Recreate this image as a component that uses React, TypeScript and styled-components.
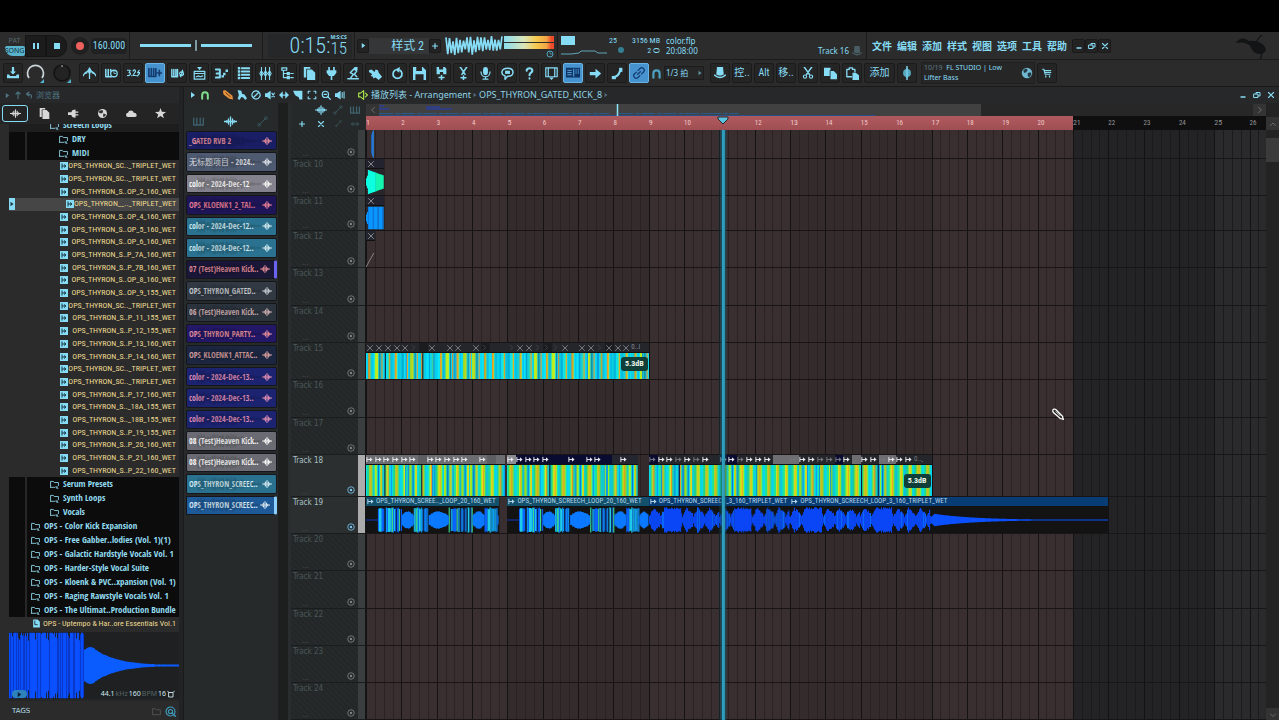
import React from 'react';
import styled, { createGlobalStyle, css } from 'styled-components';

const CONDENSED = '"Open Sans Condensed", "Roboto Condensed", "Noto Sans CJK SC", sans-serif';
const NARROW = '"Roboto Condensed", "Noto Sans CJK SC", sans-serif';
const UI = '"Noto Sans", "Noto Sans CJK SC", sans-serif';
const CYAN = '#86dcf5';
const VISIBLE_BARS = 25.46;

const barWidth = (bars: number) => `${(bars / VISIBLE_BARS) * 100}%`;

const rng = (seed: number) => {
  let s = seed * 7919 + 17;
  return () => {
    s = (s * 1103515245 + 12345) % 2147483648;
    return s / 2147483648;
  };
};

const GlobalStyle = createGlobalStyle`
  * { box-sizing: border-box; }
  body { margin: 0; background: #000; color: ${CYAN}; font: 9px/12px ${UI}; overflow: hidden; }
  button, input, select { font: inherit; color: inherit; background: none; border: 0; padding: 0; margin: 0; }
  button { display: flex; align-items: center; justify-content: center; }
  ul { list-style: none; margin: 0; padding: 0; }
  svg { display: block; flex: none; }
`;

/* ---------- icons ---------- */

const S = ({ d, w = 1.4 }: { d: string; w?: number }) => (
  <path d={d} fill="none" stroke="currentColor" strokeWidth={w} strokeLinecap="round" strokeLinejoin="round" />
);
const F = ({ d }: { d: string }) => <path d={d} fill="currentColor" fillRule="evenodd" />;

const icons: Record<string, React.ReactNode> = {
  tray: <><F d="M6.5 1a1.5 1.5 0 0 1 3 0v5H12L8 10 4 6h2.500z" /><F d="M0 10h3l1 2h8l1-2h3v5H0z" /></>,
  fly: <><S d="M0 11c2-4 5-6 8-6s6 2 8 6M8 5v9" w={1.600} /><F d="M8 0l3 5-3 4-3-4z" /><S d="M5 7l-2 1M11 7l2 1" /></>,
  pianoClock: <><S d="M1 3v9h7M4 3v8M7 3v2" w={1.900} /><circle cx="11" cy="8" r="4" fill="#222" stroke="currentColor" strokeWidth="1.600" /><S d="M11 5.500V8h2" w={1} /></>,
  count: <><S d="M0 4h4L2.500 7c3 0 2 4-2 3.500M7.500 5c0-2 3-2 3 0 0 2-3 3.500-3 5.500h3M15 4l-2 3h3l-3 4M5.800 10.500v.2M12 10.500v.2" w={1.400} /></>,
  pianoPlus: <S d="M1 3v9h8V3M3.800 3v8M6.500 3v8M13 5v6M10.800 8h5" w={1.900} />,
  pianoLoop: <><S d="M1 3v9h7V3M3.500 3v8M6 3v8" w={1.800} /><S d="M10.500 8a2.500 2.500 0 0 1 4.500-1M15.500 8a2.500 2.500 0 0 1-4.500 1.500M14 4l1 3-2 .5M12 12l-1-2.500 2-.5" w={1.500} /></>,
  windowDown: <><S d="M1.500 5.500h13v9.500h-13zM1.500 8h13M4 12l3-1 2 1 3-1" w={1.500} /><F d="M5 0h6L8 4z" /></>,
  steps: <><S d="M1 3h5v5H2h4v5H1" w={2.400} /><F d="M8 10h3v3H8zM10 7h3v3h-3zM13 3h3v3h-3z" /></>,
  rack: <><F d="M1 0h3v3H1zM1 4h3v3H1zM1 8h3v3H1zM1 12h3v3H1z" /><S d="M6 1.500h9M6 5.500h9M6 9.500h9M6 13.500h9" w={2.600} /></>,
  mixer: <><S d="M3 0v16M8 0v16M13 0v16" w={1.300} /><S d="M3 4.500L1 8l2 3.500L5 8zM8 4.500L6 8l2 3.500L10 8zM13 4.500L11 8l2 3.500L15 8z" w={1.300} /></>,
  tree: <><S d="M1 1h6v3H1zM3 4v9h4M3 8h4M12 8h3M12 13h3" w={1.500} /><F d="M7 6h4v4H7zM7 11h4v4H7z" /></>,
  file: <><F d="M1 0h8v2H4v11H1z" /><F d="M5 3h6l4 4v9H5z" /></>,
  plug: <F d="M4 0h2v4h4V0h2v4h2v3l-3 4H9v5H7v-5H5L2 7V4h2z" />,
  robot: <><S d="M1 14.500h13M4 14l4-5-4-2 5-5 3 3-3 4 3 3" w={1.800} /><F d="M9 0h4v4H9z" /></>,
  hand: <F d="M0 4l3-1 4 3 1-3 3 1 1 3 4 5-4 4-4-3-3 1 0-2-3-1 2-2-4-3z" />,
  power: <><S d="M5 4a5.500 5.500 0 1 0 6 0" w={2.100} /><F d="M5 3l6-3-1 7z" /></>,
  save: <F d="M0 0h12l4 4v12H0zM4 0v5h7V0zM3 9v7h10V9z" />,
  savePlus: <><F d="M2 0h10l2 2v7H2zM5 0v3h5V0zM6 6v3h4V6z" /><S d="M8 10.500v5M5 13h6" w={1.900} /></>,
  cutPlus: <><S d="M4 0l6 9M12 0L6 9M8 11v4.500M5 13.200h6" w={1.900} /></>,
  mic: <><rect x="5" y="0" width="6" height="10" rx="3" fill="currentColor" /><S d="M2.500 6c0 8 11 8 11 0M8 12v3M5 15h6" w={1.500} /></>,
  chat: <><S d="M8 1.500c9 0 9 10 0 10L5 15v-4C-1 9 0 1.500 8 1.500z" w={1.800} /><F d="M5 4.500h6v4H5z" /></>,
  help: <S d="M4.500 4.500c0-4 7-4 7 0 0 2.500-3.500 2.500-3.500 5.500M8 14v.3" w={2.600} />,
  film: <><S d="M1 1h14v11H1zM4 1v11M12 1v11" w={1.500} /><F d="M5 13h6l-3 3z" /></>,
  keyboard: <><path d="M0 2h16v11H0zM8 3v9h1.500V3zM11 3v6h1V3zM13.500 3v6h1V3z" fill="#0f3566" fillRule="evenodd" /><path d="M1.500 5h5M1.500 7.500h5M1.500 10h5" stroke="#6ab0e6" strokeWidth="1" /></>,
  arrow: <F d="M1 6h7V2l7 6-7 6v-4H1z" />,
  slide: <><F d="M1 11h5v4H1z" /><S d="M5 12c4-1 5-3 6-7" w={2.600} /><F d="M10 1h4v5h-4z" /></>,
  link: <S d="M6.500 9.500l3-3M5 7L2.500 9.500c-2 2 1.500 6 4 4L9 11M7 5l2.500-2.500c2-2 6 1.500 4 4L11 9" w={1.500} />,
  magnet: <S d="M3.500 14V8c0-6 9-6 9 0v6" w={3.200} />,
  hat: <><F d="M4 0h8l1 10c-3 2-7 2-10 0z" /><S d="M1 11c4 4 10 4 14 0" w={2.200} /></>,
  cut: <><S d="M3 0l7 10M13 0L6 10" w={1.900} /><circle cx="4" cy="12.800" r="2.200" fill="none" stroke="currentColor" strokeWidth="1.500" /><circle cx="12" cy="12.800" r="2.200" fill="none" stroke="currentColor" strokeWidth="1.500" /></>,
  copy: <><F d="M0 1h8v3H7v7H0z" /><F d="M8 5h4l4 4v6H8z" /></>,
  paste: <><S d="M7 12H1V3h3V1h4v2h3v3" w={1.600} /><F d="M8 7h4l4 3v6H8z" /></>,
  wheel: <><S d="M8 0v16" w={1.600} /><circle cx="8" cy="8" r="4.500" fill="#57a9c0" /><S d="M8 3v10" w={1.300} /></>,
  globe: <><circle cx="8" cy="8" r="7" fill="#6fb7cf" /><path d="M3 4l4-2 2 2-2 3-3 1zM9 8l4-1 1 3-3 4-2-2z" fill="#243a44" /></>,
  world: <><circle cx="8" cy="8" r="6.500" fill="#d8d8d8" /><path d="M3 4l5-1 1 3-3 2-3-1zM9 8l4 1-1 3-3 1z" fill="#333" /></>,
  cart: <><S d="M1 2h2l2 8h8M4 4h10M5 7h9" w={1.700} /><F d="M5 12h2v3H5zM11 12h2v3h-2z" /></>,
  wave: <><S d="M0 8h16" w={1.600} /><S d="M3.500 7v2M5.500 5v6M8 2.500v11M10.500 5v6M12.500 7v2" w={1.700} /></>,
  plugin: <F d="M0 6h5c0-3 3-4 6-4v3h4v2h-4v2h4v2h-4v3c-3 0-6-1-6-4H0z" />,
  cloud: <F d="M3 13a3 3 0 0 1 0-6c1-5 8-4 8 0 5-1 6 6 2 6z" />,
  star: <F d="M8 0l2 5.500 6 .2-4.700 3.600L13 15l-5-3.300L3 15l1.700-5.700L0 5.700l6-.2z" />,
  up: <S d="M8 15V3M4 6l4-4 4 4" w={2.200} />,
  back: <S d="M12 14c3-5 0-8-8-8M8 2L3 6l5 4" w={2.200} />,
  play: <F d="M4 2l8 6-8 6z" />,
  pencil: <><path d="M0 3c0-3 3-3 5-2l10 8 1 6-6-1L1 7z" fill="#e8923c" /><path d="M4 4l8 7" stroke="#5a3413" strokeWidth="1.500" /></>,
  cursor: <><path d="M1 4c0-3 3-3 4-2l9 9 1 4-4-1-9-8z" fill="#222" stroke="#fff" strokeWidth="1.700" /><path d="M5 4.500l6 6" stroke="#fff" strokeWidth="1.200" /></>,
  brush: <F d="M1 0l6 1 1 5 4 1 4 6-3 3-3-4-3-1-3 5-3-2 2-6z" />,
  mute: <S d="M8 1.500a6.500 6.500 0 1 0 .1 0M3.500 12.500l9-9" w={2} />,
  speakerX: <><F d="M0 5h3l6-4v14l-6-4H0z" /><S d="M11 5l4 6M15 5l-4 6" w={1.700} /></>,
  speaker: <><F d="M0 5h3l6-4v14l-6-4H0z" /><S d="M11.500 4v8M14.500 3v10" w={1.700} /></>,
  speakerOut: <><S d="M1 5h3l5-4v14l-5-4H1z" w={1.900} /><S d="M12 5l3 3-3 3" w={1.900} /></>,
  slip: <F d="M0 8l6-6v5h4V2l6 6-6 6V9H6v5z" />,
  slice: <F d="M0 1h15v14h-5c0-3-1-4-4-5S2 5 0 1z" />,
  select: <S d="M2 5V2h3M11 2h3v3M14 11v3h-3M5 14H2v-3" w={1.900} />,
  zoom: <><circle cx="7" cy="7" r="5" fill="none" stroke="currentColor" strokeWidth="1.900" /><S d="M10.500 10.500L15 15M5 7h4" w={2} /></>,
  curve: <><S d="M4 12l8-8" w={1.200} /><circle cx="3" cy="13" r="2" fill="none" stroke="currentColor" /><circle cx="13" cy="3" r="2" fill="none" stroke="currentColor" /></>,
  piano: <S d="M1 3v10h14V3M5.500 3v9M10.500 3v9" w={2} />,
  plus: <S d="M8 3v10M3 8h10" w={2.400} />,
  cross: <S d="M3 3l10 10M13 3L3 13" w={2.200} />,
  crossThin: <S d="M3 3l10 10M13 3L3 13" w={1.700} />,
  horiz: <S d="M1 8h14M4 5L1 8l3 3M12 5l3 3-3 3" w={1.500} />,
  left: <S d="M11 3L5 8l6 5" w={1.600} />,
  right: <S d="M5 3l6 5-6 5" w={1.600} />,
  chevUp: <S d="M3 11l5-5 5 5" w={1.600} />,
  chevDown: <S d="M3 6l5 5 5-5" w={1.600} />,
  min: <S d="M4 12h8" w={2.600} />,
  restore: <><S d="M2 6h8v7H2zM6 6V3h8v7h-4" w={2} /></>,
  folder: <S d="M1 13V2.500h5l1.500 2H15V10M1 13h8M12.500 11.500v4M11 12l3 3" w={1.500} />,
  folderPlain: <S d="M1 13V3h5l2 2h7v8z" w={1.500} />,
  sample: <><rect width="16" height="16" fill="#86dcf5" /><path d="M4 3v10M8 5l4 3-4 3M4 8h6" stroke="#173642" strokeWidth="2" fill="none" /></>,
  doc: <><F d="M2 1h8l4 4v10H2z" /><path d="M5 3v7h5" stroke="#1b3c48" strokeWidth="1.700" fill="none" /></>,
  clipArrow: <><S d="M2 3v10M3 8h8" w={2.200} /><F d="M9 3l6 5-6 5z" /></>,
  clock: <><circle cx="8" cy="8" r="6" fill="none" stroke="currentColor" strokeWidth="2" /><S d="M8 4v4h4" /></>,
  search: <><circle cx="8" cy="8" r="6.500" fill="none" stroke="currentColor" strokeWidth="1.700" /><circle cx="8" cy="8" r="3" fill="none" stroke="currentColor" strokeWidth="1.500" /><S d="M10 10l5 5" w={2} /></>,
  circle: <><circle cx="8" cy="8" r="6.500" fill="none" stroke="currentColor" strokeWidth="1.700" /><circle cx="8" cy="8" r="2.500" fill="currentColor" /></>,
  stretch: <S d="M4 5h8v9H4zM1 2l3 3M15 2l-3 3" w={1.800} />,
};

const Icon = ({ n, s = 12 }: { n: string; s?: number }) => (
  <svg width={s} height={s} viewBox="0 0 16 16" aria-hidden="true">{icons[n]}</svg>
);

/* ---------- shell ---------- */

const Page = styled.div`
  min-height: 100vh; display: flex; flex-direction: column; padding-top: 32px; background: #000;
`;
const Bar = styled.header`
  height: 28px; display: flex; align-items: center; background: #2c2c2c; border-bottom: 1px solid #1b1b1b; overflow: hidden;
`;
const ToolRow = styled.div`
  height: 27px; display: flex; align-items: center; gap: 2px; padding-left: 3px; background: #2b2b2b; border-bottom: 1px solid #191919;
`;
const Transport = styled.div`display: flex; height: 22px; margin-left: 4px;`;
const ModeSwitch = styled.button`
  width: 21px; flex-direction: column; font: 7px/10px ${UI}; color: #56696f;
  span { width: 20px; border-radius: 2px 2px 2px 8px; background: #5ab4cd; color: #12303a; }
`;
const TransportButton = styled.button<{ $end?: boolean }>`
  width: 21px; background: #1c1c1d; border: 1px solid #151515; ${p => p.$end && 'border-radius: 0 10px 10px 0;'}
`;
const RecordButton = styled.button`
  width: 18px; height: 18px; border-radius: 9px; margin-left: 4px; background: #202020;
  &::after { content: ''; width: 8px; height: 8px; border-radius: 4px; background: #f0605c; }
`;
const Tempo = styled.input`
  width: 36px; height: 16px; margin-left: 2px; background: #1f2122; border-radius: 4px; font: 10px/16px ${NARROW}; text-align: center;
`;
const Divider = styled.i<{ $m?: number }>`width: 1px; height: 28px; background: #1c1c1c; margin: 0 ${p => p.$m ?? 2}px;`;
const Position = styled.input`
  appearance: none; width: 117px; height: 12px; margin-left: 8px; background: linear-gradient(${CYAN}, ${CYAN}) 0 50% / 112px 3px no-repeat;
  &::-webkit-slider-thumb { appearance: none; width: 10px; height: 11px; border-radius: 5px; background: linear-gradient(90deg, #262626 4px, #7f9aa3 4px, #7f9aa3 6px, #262626 6px); }
`;
const Clock = styled.output`
  display: flex; align-items: center; width: 84px; height: 24px; padding-right: 5px; justify-content: flex-end; background: #262728; font: 300 22px/24px ${NARROW};
  span { display: flex; flex-direction: column; align-items: flex-start; } sub { font-size: 17px; line-height: 17px; } sup { font: bold 5px/6px ${UI}; }
`;
const SmallButton = styled.button<{ $w?: number }>`
  width: ${p => p.$w ?? 12}px; height: 14px; background: #232323; border: 1px solid #1a1a1a; border-radius: 2px;
`;
const PatternButton = styled.button`
  width: 60px; height: 16px; background: #353637; justify-content: flex-end; padding-right: 5px; font: 12px/16px ${NARROW};
`;
const Meter = styled.div`
  width: 51px; height: 20px; display: grid; grid-template-rows: 6px 6px 8px; row-gap: 1px; justify-items: end; color: #4fa6c2;
  i { width: 50px; background: linear-gradient(90deg, #8adcf0, #d9e6b8 40%, #f5c94d 65%, #f2a544 85%, #ee4b2b 95%); }
`;
const Readout = styled.div<{ $w: number }>`
  width: ${p => p.$w}px; height: 20px; font: 8px/10px ${NARROW}; text-align: right; white-space: nowrap;
`;
const Hint = styled.div`
  flex: 0 0 206px; display: flex; justify-content: space-between; height: 22px; padding: 1px 4px 1px 6px; font: 8px/10px ${UI};
  span:last-child { align-self: flex-end; display: flex; align-items: center; gap: 3px; } b { color: #4a5d64; }
`;
const Menu = styled.nav`
  display: flex; gap: 5px; margin: 0 5px 0 5px; font: bold 10px/16px ${UI};
  button { width: 20px; white-space: nowrap; }
`;
const Logo = styled.svg`margin: 0 6px 0 auto;`;

const ToolButton = styled.button<{ $on?: boolean; $w?: number }>`
  flex: none; width: ${p => p.$w ?? 20}px; height: 20px; border-radius: 2px; border: 1px solid #1b1b1b; white-space: nowrap;
  background: #252525; font: 10px/14px ${NARROW};
  ${p => p.$on && css`background: #4793d0; border-color: #6ab4e4; color: #143c6e;`}
`;
const Knob = styled.div<{ $dim?: boolean }>`
  width: 25px; height: 24px; display: flex; align-items: center; color: ${p => (p.$dim ? '#141414' : '#c9d3d6')};
`;
const MagnetMark = styled.span`color: #4ba0c0;`;
const SnapBox = styled.label`
  width: 40px; height: 14px; display: flex; align-items: center; border: 1px solid #1c1c1c; background: #272727; color: #5d8fa0;
  select { appearance: none; flex: 1; min-width: 0; height: 12px; padding-left: 1px; font: 8px/12px ${UI}; color: ${CYAN}; }
`;
const News = styled.div`
  width: 114px; height: 22px; margin-left: 2px; padding: 0 1px 0 2px; display: flex; justify-content: space-between; align-items: center; background: #262626;
  border: 1px solid #1f1f1f; font: 7px/10px ${UI}; white-space: nowrap; i { color: #5d7a84; font-style: normal; }
`;

const Main = styled.main`flex: 1; display: flex; background: #222324;`;

/* ---------- browser ---------- */

const Browser = styled.aside`width: 179px; flex: none; display: flex; flex-direction: column; background: #2b2b2c;`;
const BrowserTitle = styled.div`
  height: 16px; display: flex; align-items: center; gap: 3px; padding-left: 4px; color: #4f7583; font: 8px/12px ${UI}; background: #272829;
`;
const Tabs = styled.div`
  height: 21px; display: flex; align-items: center; padding-left: 2px; color: #d8d8d8; background: #242425;
`;
const Tab = styled.button<{ $on?: boolean }>`
  width: 26px; height: 17px; margin-right: 3px; border: 1px solid ${p => (p.$on ? CYAN : 'transparent')}; border-radius: 3px;
`;
const Tree = styled.div`padding-left: 9px; display: flex; flex-direction: column; overflow: hidden;`;
const FolderList = styled.ul`
  background: linear-gradient(90deg, transparent 16px, #272727 16px, #272727 18px, transparent 18px), #0c0c0d;
`;
const FolderRow = styled.li<{ $indent: number; $cut?: boolean }>`
  height: ${p => (p.$cut ? 8 : 14)}px; padding-left: ${p => p.$indent}px; overflow: hidden; display: flex; align-items: ${p => (p.$cut ? 'flex-end' : 'center')};
  ${p => p.$cut && 'background: #1e1e1f;'}
  button { gap: 4px; height: 14px; font: 9px/14px ${CONDENSED}; color: #93dcf0; white-space: nowrap; }
`;
const SampleList = styled.ul`height: 317px; display: grid; grid-auto-rows: 1fr;`;
const SampleRow = styled.li<{ $on?: boolean }>`
  display: flex; align-items: center; justify-content: space-between; min-height: 0; padding: 0 3px 0 ${p => (p.$on ? 0 : 51)}px;
  ${p => p.$on && 'background: #464646;'}
  button { justify-content: space-between; height: 12px; width: ${p => (p.$on ? 110 : 116)}px; font: 8px/12px ${NARROW}; color: #eedb92; white-space: nowrap; }
`;
const PlayMark = styled.span`width: 6px; height: 12px; display: flex; align-items: center; background: ${CYAN}; color: #234;`;
const PackRow = styled.div`
  height: 13px; display: flex; align-items: center; justify-content: space-between; padding: 0 3px 0 23px; color: ${CYAN};
  span { font: 8px/13px ${NARROW}; color: #eedb92; white-space: nowrap; }
`;
const Preview = styled.section`
  height: 69px; margin: 2px 0 0 9px; display: grid; background: #1f2022; border-bottom: 2px solid #262626;
  > * { grid-area: 1 / 1; }
`;
const PreviewInfo = styled.div`
  align-self: end; display: flex; align-items: center; padding: 0 4px 0 3px; font: 7px/10px ${UI}; color: #566; gap: 1px;
  b { font-weight: 400; color: #cfe9f0; } button { width: 15px; height: 8px; border-radius: 4px; background: #2f83bd; color: #0b2038; margin-right: auto; }
`;
const TagBar = styled.footer`
  height: 20px; display: flex; align-items: center; gap: 4px; padding: 0 3px 0 12px; color: #3f9ec0; font: 7px/12px "DejaVu Sans", sans-serif;
  span { margin-right: auto; color: #b5dce6; } i { color: #555; }
`;

/* ---------- playlist ---------- */

const Playlist = styled.section`flex: 1; min-width: 0; margin-left: 4px; display: flex; flex-direction: column; border-left: 1px solid #1a1a1a; background: #262a2b;`;
const TitleBar = styled.div`height: 16px; display: flex; align-items: center; gap: 2px; padding: 0 2px 0 5px; background: #262829; color: ${CYAN};`;
const TitleGap = styled.span`width: 7px;`;
const Tool = styled.button<{ $c?: string }>`width: 12px; height: 12px; ${p => p.$c && `color: ${p.$c};`}`;
const Crumbs = styled.div`
  display: flex; align-items: center; gap: 1px; margin-right: auto; font: 9px/14px ${UI}; white-space: nowrap; color: #8fd3e6; i { color: #567; }
`;
const Columns = styled.div`flex: 1; display: flex; min-height: 0;`;
const Picker = styled.div`width: 107px; flex: none; padding: 0 14px 0 2px; background: linear-gradient(90deg, transparent 94px, #1d1f1f 94px, #1d1f1f 104px, #2a2d2d 104px);`;
const PickerHead = styled.div`height: 28px; display: flex; gap: 20px; align-items: center; padding: 8px 0 0 7px; color: #3c5f6b; em { color: ${CYAN}; }`;
const PickerList = styled.div`height: 384px; display: grid; grid-auto-rows: 1fr; row-gap: 2px;`;
const PickerItem = styled.button<{ $bg: string; $c: string; $edge?: string }>`
  display: grid; grid-template-columns: 1fr 12px; padding: 0 2px; min-height: 0; border: 1px solid #14161c; border-radius: 2px; overflow: hidden;
  background: ${p => p.$bg}; color: ${p => p.$c}; font: 8px/16px ${CONDENSED}; text-align: left; white-space: nowrap;
  ${p => p.$edge && `border-right: 3px solid ${p.$edge};`}
  > svg:first-child { grid-area: 1 / 1 / 2 / 3; color: #000; opacity: .14; } > span { grid-area: 1 / 1; } > svg:last-child { grid-area: 1 / 2; }
`;
const Arrangement = styled.div`flex: 1; min-width: 0; display: flex; flex-direction: column;`;
const Split = styled.div<{ $h?: number }>`display: flex; ${p => (p.$h ? `height: ${p.$h}px;` : 'flex: 1; min-height: 0;')}`;
const HeadTools = styled.div`
  width: 75px; flex: none; display: grid; grid-template-columns: 22px 16px 18px 16px; grid-template-rows: 14px 13px; place-items: center; background: #252929; color: #41636e;
  em { color: ${CYAN}; } em:first-of-type { grid-column: 2; } button { grid-column: 1; grid-row: 2; color: ${CYAN}; } > :nth-child(5) { grid-column: 2; }
`;
const TimeColumn = styled.div`flex: 1; min-width: 0; display: flex; flex-direction: column;`;
const Overview = styled.div`display: flex; height: 12px; margin-top: 1px; button { width: 13px; background: #343434; color: #777; }`;
const OverviewMap = styled.div`flex: 1; display: flex; background: #272727; svg { flex: 0 1 602px; background: #414141; }`;
const Ruler = styled.div`
  position: relative; height: 14px; display: flex; overflow: hidden; background: #0f0f10; font: 7px/14px ${NARROW}; color: #9a9a9a;
`;
const RulerBar = styled.span<{ $in: boolean; $strong?: boolean }>`
  flex: 0 0 ${barWidth(1)}; background: ${p => (p.$in ? 'linear-gradient(#b05a5f, #a04e53)' : '#0f0f10')};
  color: ${p => (p.$in ? '#f0c8c8' : '#969696')}; ${p => p.$strong && 'font-size: 8px;'}
`;
const EdgeColumn = styled.div`width: 13px; flex: none; display: flex; flex-direction: column; justify-content: space-between; background: #232323; color: #777; button { height: 13px; background: #333; }`;
const EdgeThumb = styled.i`height: 24px; margin: 8px 0 auto; background: #3b3b3b;`;

const Heads = styled.div`width: 75px; flex: none;`;
const Head = styled.div<{ $h: number; $lit?: boolean }>`
  height: ${p => p.$h}px; display: grid; grid-template-columns: 1fr 14px 8px; border-bottom: 1px solid #1a1d1d;
  background: ${p => (p.$lit ? '#2b2f2f' : 'repeating-linear-gradient(45deg, #232727 0 2px, #262a2a 2px 4px)')};
  font: 8px/12px "DejaVu Sans Condensed", sans-serif; color: ${p => (p.$lit ? '#a9c0c6' : '#4b5759')};
  > span { padding-left: 2px; white-space: nowrap; display: flex; flex-direction: column; justify-content: space-between; }
  small { font: 8px/10px ${UI}; padding-left: 9px; color: #444c4e; }
  button { align-self: end; height: 12px; color: ${p => (p.$lit ? '#7cc4f0' : '#7c8283')}; }
  i { background: ${p => (p.$lit ? '#acacac' : '#3a3e3e')}; border-right: 1px solid #161616; }
`;
const Canvas = styled.div`position: relative; flex: 1; min-width: 0; display: grid; overflow: hidden; > * { grid-area: 1 / 1; min-width: 0; min-height: 0; }`;
const Grid = styled.div`display: flex; overflow: hidden;`;
const GridBar = styled.div<{ $in: boolean; $light: boolean }>`
  flex: 0 0 ${barWidth(1)}; display: flex; border-left: 1px solid #151213;
  background: ${p => (p.$in ? (p.$light ? '#392f30' : '#342b2c') : p.$light ? '#2a2a2c' : '#232325')};
  i { flex: 1; } i + i { border-left: 1px solid ${p => (p.$in ? '#2a2223' : '#1b1b1c')}; }
`;
const Lanes = styled.div``;
const Lane = styled.div<{ $h: number }>`position: relative; height: ${p => p.$h}px; border-bottom: 1px solid #191415;`;
const Clip = styled.div<{ $bg?: string }>`
  position: absolute; top: 0; bottom: 0; display: flex; flex-direction: column; background: ${p => p.$bg ?? 'transparent'}; overflow: hidden;
  > svg { flex: 1; width: 100%; min-height: 0; }
`;
const ClipHead = styled.div<{ $bg: string; $c: string }>`
  height: 10px; flex: none; display: flex; align-items: center; gap: 2px; padding-left: 1px; background: ${p => p.$bg}; color: ${p => p.$c};
  font: 7px/9px ${NARROW}; white-space: nowrap; border-bottom: 1px solid #111;
`;
const Cells = styled.div`height: 10px; flex: none; display: flex; border-bottom: 1px solid #111;`;
const Cell = styled.span<{ $bg: string; $c: string }>`
  flex: 1 1 0; min-width: 0; display: flex; align-items: center; background: ${p => p.$bg}; color: ${p => p.$c}; font: 7px/9px ${NARROW}; white-space: nowrap;
`;
const Gain = styled.span`
  position: absolute; right: 1px; bottom: 8px; padding: 0 4px; border-radius: 3px; background: #0f3f38; color: #f0f5e8; font: bold 8px/14px ${NARROW};
`;
const Playhead = styled.div`
  pointer-events: none; position: relative; width: 9px; height: 100%; justify-self: start; transform: translateX(-50%);
  background: linear-gradient(90deg, transparent, #15566aaa 3px, #2fa3c4 4px, #2b93b0 6px, #15566a88 7px, transparent);
`;
const Marker = styled.svg`position: absolute; top: 0; transform: translateX(-50%);`;
const PenCursor = styled.span`position: absolute; top: 278px;`;

/* ---------- drawings ---------- */

type Kind = 'warm' | 'lush';
const palettes: Record<Kind, string[][]> = {
  warm: [
    ['#00d8fa', '#10e4f0', '#10e4f0', '#e8a028', '#c8d028', '#10dcec', '#00c0f8', '#10e4ec'],
    ['#06dcf8', '#06dcf8', '#e89c28', '#d8bc28', '#20e8d0', '#00c8f8', '#00d8f8', '#10e4f0'],
    ['#00d8f8', '#00a8d8', '#10e0f0', '#10e0f0', '#40e8a0', '#e8a828', '#10d8f0', '#00d0f0'],
    ['#acf020', '#c0f020', '#d0e820', '#20e0d0', '#0a88b0', '#10d8f0', '#e0a030', '#10dcf0'],
  ],
  lush: [
    ['#10e0c0', '#20e490', '#9cf028', '#e8dc18', '#e8b020', '#a0f020', '#20e4a8', '#08d4f0'],
    ['#08dce8', '#20e498', '#20e498', '#c4ec20', '#e8c020', '#a0ec20', '#10e0c8', '#08d0f0'],
    ['#08dcf0', '#10e0cc', '#60ec68', '#d4e820', '#e8a028', '#20e4a0', '#08d8ec', '#08a0f0'],
    ['#a8f020', '#a8f020', '#10e0c8', '#0878d8', '#08d4f0', '#b0f020', '#e8cc1c', '#10e0d0'],
  ],
};

const Stripes = ({ beats, kind, seed }: { beats: number; kind: Kind; seed: number }) => {
  const r = rng(seed);
  const rects: React.ReactNode[] = [];
  for (let b = 0; b < beats; b++) {
    const p = palettes[kind][Math.floor(r() * 4)];
    p.forEach((c, i) => {
      const v = r();
      const fill = v > 0.985 ? '#0c1c38' : v > 0.95 ? '#0e9fe8' : c;
      rects.push(<rect key={`${b}-${i}`} x={b * 8 + i} y="0" width="1.3" height="10" fill={fill} />);
    });
  }
  return <svg viewBox={`0 0 ${beats * 8} 10`} height="10" preserveAspectRatio="none">{rects}</svg>;
};

type Column = [amp: number, color: string];
const WaveDrawing = ({ cols, height = 100 }: { cols: Column[]; height?: number }) => {
  const paths: Record<string, string> = {};
  cols.forEach(([a, c], x) => {
    const h = Math.max(a, 0.03) * 49;
    paths[c] = `${paths[c] ?? ''}M${x + 0.5} ${50 - h}V${50 + h}`;
  });
  return (
    <svg viewBox={`0 0 ${cols.length} 100`} height={height} width="100%" preserveAspectRatio="none">
      {Object.entries(paths).map(([c, d]) => <path key={c} d={d} stroke={c} strokeWidth="1.1" />)}
    </svg>
  );
};

const loop20 = (len: number): Column[] => {
  const r = rng(5);
  const blobs: [number, number][] = [[36, 48], [63, 83], [107, 119], [132, 141]];
  return Array.from({ length: len }, (_, x): Column => {
    if (x < 12) return [0.03, '#1238b8'];
    const blob = blobs.find(([a, b]) => x >= a && x < b);
    if (blob) {
      const t = (x - blob[0]) / (blob[1] - blob[0]);
      return [0.25 + 0.38 * Math.sin(Math.PI * Math.min(1, t * 0.9 + 0.08)) + r() * 0.08, '#0a78ff'];
    }
    const v = r();
    return [0.85 + r() * 0.15, v > 0.9 ? '#3fe08a' : v > 0.68 ? '#1ecbe8' : v > 0.5 ? '#0d2a55' : v > 0.3 ? '#0f9cf5' : '#0a62ff'];
  });
};
const loop3 = (len: number, seed: number): Column[] => {
  const r = rng(seed);
  return Array.from({ length: len }, (_, x): Column => {
    if (x >= 141) return [0.52 * Math.exp(-(x - 141) / 42) * Math.min(1, 0.5 + (x - 141) / 6), '#0a50ff'];
    const q = x % 70;
    if (q >= 15 && q < 32) return [0.82 + r() * 0.18, '#0a46f5'];
    const ph = (q % 11) / 11;
    const amp = ph < 0.4 ? 0.3 + ph * 1.7 : 1.25 - ph * 0.8;
    return [Math.min(1, amp * (0.8 + r() * 0.3)), r() > 0.85 ? '#0a68ff' : '#0a46f0'];
  });
};
const previewCols = (() => {
  const r = rng(3);
  return Array.from({ length: 170 }, (_, x): Column => {
    if (x < 75) {
      const v = r();
      return [v > 0.7 ? 0.75 + r() * 0.25 : 1, r() > 0.8 ? '#0a38c8' : '#0a50ff'];
    }
    const t = x - 75;
    return [Math.min(0.55, 0.48 + t / 60) * Math.exp(-Math.max(0, t - 8) / 22) + r() * 0.015, '#0a5cff'];
  });
})();
const thumbCols = (() => {
  const r = rng(21);
  return Array.from({ length: 80 }, (_, x): Column => [x < 8 ? 0.05 : (0.3 + r() * 0.6) * (x < 45 ? 1 : Math.exp(-(x - 45) / 12)), 'currentColor']);
})();
const tail = (flat: boolean): Column[] => Array.from({ length: 18 }, (_, x): Column => {
  const a = x < 2 ? 0.3 + x * 0.2 : flat ? 0.96 : 1 - x * 0.028;
  return [a, flat ? (x % 5 === 2 ? '#0b7ee8' : '#0a96ff') : x < 10 ? '#0cffe0' : '#14f5b0'];
});

const scopePath = (() => {
  const r = rng(12);
  return Array.from({ length: 33 }, (_, i) => `${i ? 'L' : 'M'}${(i * 7) / 4} ${i % 2 ? 14 + r() * 6 : 1 + r() * 6}`).join('');
})();

/* ---------- data ---------- */

const tools = ['fly', 'pianoClock', 'count', 'pianoPlus*', 'pianoLoop', 'windowDown', 'steps', 'rack', 'mixer', 'tree', 'file', 'plug', 'robot',
  'hand', 'power', 'save', 'savePlus', 'cutPlus', 'mic', 'chat', 'help', 'film', 'keyboard*', 'arrow', 'slide', 'link*'];
const samples = ['SC.._TRIPLET_WET', 'SC.._TRIPLET_WET', 'S..OP_2_160_WET', '_.._TRIPLET_WET', 'S..OP_4_160_WET', 'S..OP_5_160_WET', 'S..OP_6_160_WET',
  'S..P_7A_160_WET', 'S..P_7B_160_WET', 'S..OP_8_160_WET', 'S..OP_9_155_WET', 'SC.._TRIPLET_WET', 'S..P_11_155_WET', 'S..P_12_155_WET', 'S..P_13_160_WET',
  'S..P_14_160_WET', 'SC.._TRIPLET_WET', 'SC.._TRIPLET_WET', 'S..P_17_160_WET', 'S.._18A_155_WET', 'S.._18B_155_WET', 'S..P_19_155_WET', 'S..P_20_160_WET',
  'S..P_21_160_WET', 'S..P_22_160_WET'];
const lowerFolders: [string, number][] = [['Serum Presets', 41], ['Synth Loops', 41], ['Vocals', 41], ['OPS - Color Kick Expansion', 22],
  ['OPS - Free Gabber..lodies (Vol. 1)(1)', 22], ['OPS - Galactic Hardstyle Vocals Vol. 1', 22], ['OPS - Harder-Style Vocal Suite', 22],
  ['OPS - Kloenk & PVC..xpansion (Vol. 1)', 22], ['OPS - Raging Rawstyle Vocals Vol. 1', 22], ['OPS - The Ultimat..Production Bundle', 22]];
const pickerItems: [string, string, string, string?][] = [
  ['_GATED RVB 2', '#1a1f66', '#e58fa0'], ['无标题项目 - 2024..', '#4f5a70', '#e4e8ee'], ['color - 2024-Dec-12', '#84838c', '#fff'],
  ['OPS_KLOENK1_2_TAI..', '#1e1658', '#e87f9a'], ['color - 2024-Dec-12..', '#2b7390', '#d2eef5'], ['color - 2024-Dec-12..', '#2b7390', '#d2eef5'],
  ['07 (Test)Heaven Kick..', '#1b1738', '#e08c98', '#6a62f0'], ['OPS_THYRON_GATED..', '#333a44', '#c8ccd2'], ['06 (Test)Heaven Kick..', '#2c343e', '#d0b0b4'],
  ['OPS_THYRON_PARTY..', '#241868', '#e590a0'], ['OPS_KLOENK1_ATTAC..', '#1c2742', '#d8a0a0'], ['color - 2024-Dec-13..', '#1c2470', '#e090b8'],
  ['color - 2024-Dec-13..', '#1c2470', '#e090b8'], ['color - 2024-Dec-13..', '#1c2470', '#e090b8'], ['08 (Test)Heaven Kick..', '#6c6c74', '#fff'],
  ['08 (Test)Heaven Kick..', '#6c6c74', '#fff'], ['OPS_THYRON_SCREEC..', '#2a7290', '#d2eef5'], ['OPS_THYRON_SCREEC..', '#1f5a98', '#d8ecfa', '#8cd0ff']];
const trackHeights = [29, 37, 35, 37, 38, 37, 37, 38, 37, 42, 37, 37, 38, 37, 37, 37];

const crosses = new Set([0, 1, 2, 3, 4, 7, 9, 10, 12, 17, 18, 22, 24, 25, 27, 28, 29]);
const dimArrows = new Set([5, 13, 16, 19, 20, 21, 26]);
const hits = new Set([0, 1, 2, 3, 4, 5, 7, 8, 9, 10, 11, 13, 16, 17, 18, 19, 20, 23, 25, 26, 29, 33, 34, 36, 38, 40, 41, 43, 44, 45, 49, 50, 54, 56, 57, 59, 60, 61]);
const faint = new Set([32, 35, 37, 42, 48, 51, 52, 53, 58]);
const headColor = (b: number) => {
  if (b < 16) return b === 6 || b === 14 ? '#5d5e62' : '#6c6d71';
  if (b === 16) return '#8b8c92';
  if (b < 32) return b > 27 ? '#23262e' : '#0a0b30';
  if ([32, 40, 41, 53].includes(b)) return '#0a0b30';
  if ([46, 47, 48, 55, 58, 59].includes(b)) return '#6e6e72';
  return '#25262b';
};

const KickClip = ({ from, beats, offset, kind, end }: { from: number; beats: number; offset: number; kind: Kind; end?: boolean }) => (
  <Clip style={{ left: barWidth(from - 1), width: barWidth(beats / 4) }}>
    <Cells>
      {Array.from({ length: Math.ceil(beats) }, (_, i) => {
        const b = i + offset;
        if (kind === 'warm') {
          return (
            <Cell key={i} $bg={i % 7 === 6 ? '#1b1c20' : '#25262b'} $c={crosses.has(b) || b === 30 ? '#858890' : '#44484f'}>
              {crosses.has(b) ? <Icon n="crossThin" s={8} /> : dimArrows.has(b) ? <Icon n="right" s={7} /> : b === 30 ? '0..8' : null}
            </Cell>
          );
        }
        return (
          <Cell key={i} $bg={headColor(b)} $c={hits.has(b) ? '#e8e8ee' : '#74767e'}>
            {hits.has(b) || faint.has(b) ? <Icon n="clipArrow" s={7} /> : b === 62 ? '0.._8' : null}
          </Cell>
        );
      })}
    </Cells>
    <Stripes beats={Math.ceil(beats)} kind={kind} seed={offset + 9} />
    {end && <Gain>5.3dB</Gain>}
  </Clip>
);

const LoopClip = ({ from, to, name, deep, seed = 1 }: { from: number; to: number; name: string; deep?: boolean; seed?: number }) => {
  const px = Math.round((to - from) * 35.35);
  return (
    <Clip $bg="#131314" style={{ left: barWidth(from - 1), width: barWidth(to - from) }}>
      <ClipHead $bg={deep ? '#083c74' : '#12506c'} $c="#b4d4e6"><Icon n="clipArrow" s={7} />{name}</ClipHead>
      <WaveDrawing cols={deep ? loop3(px, seed) : loop20(px)} height={26} />
    </Clip>
  );
};

const laneContent: Record<number, React.ReactNode> = {
  9: <Clip style={{ left: barWidth(0.13), width: barWidth(0.11) }}><WaveDrawing cols={[[0.7, '#1d5fae'], [0.9, '#2a78cc'], [1, '#2a78cc'], [1, '#1d5fae']]} height={28} /></Clip>,
  10: <Clip $bg="#28262a" style={{ left: 0, width: barWidth(0.5) }}><ClipHead $bg="#22232f" $c="#999"><Icon n="crossThin" s={8} /></ClipHead><WaveDrawing cols={tail(false)} height={26} /></Clip>,
  11: <Clip $bg="#28262a" style={{ left: 0, width: barWidth(0.5) }}><ClipHead $bg="#22232f" $c="#999"><Icon n="crossThin" s={8} /></ClipHead><WaveDrawing cols={tail(true)} height={24} /></Clip>,
  12: (
    <Clip style={{ left: 0, width: barWidth(0.25) }}>
      <ClipHead $bg="#22262f" $c="#999"><Icon n="crossThin" s={8} /></ClipHead>
      <svg viewBox="0 0 9 26" height="26" preserveAspectRatio="none"><path d="M0 26L8 12" stroke="#8a8284" fill="none" /></svg>
    </Clip>
  ),
  15: <KickClip from={1} beats={32} offset={0} kind="warm" end />,
  18: (
    <>
      <KickClip from={1} beats={15.700} offset={0} kind="lush" />
      <KickClip from={5} beats={14.750} offset={16} kind="lush" />
      <KickClip from={9} beats={32} offset={32} kind="lush" end />
    </>
  ),
  19: (
    <>
      <LoopClip from={1} to={4.750} name="OPS_THYRON_SCREE.._LOOP_20_160_WET" />
      <LoopClip from={5} to={9} name="OPS_THYRON_SCREECH_LOOP_20_160_WET" />
      <LoopClip from={9} to={13} name="OPS_THYRON_SCREEC.._3_160_TRIPLET_WET" deep seed={4} />
      <LoopClip from={13} to={22} name="OPS_THYRON_SCREECH_LOOP_3_160_TRIPLET_WET" deep seed={8} />
    </>
  ),
};

const bars = Array.from({ length: 26 }, (_, i) => i + 1);

/* ---------- sections ---------- */

const TopBar = () => (
  <Bar>
    <Transport>
      <ModeSwitch>PAT<span>SONG</span></ModeSwitch>
      <TransportButton aria-label="Pause"><svg width="8" height="8"><path d="M1 1h2v6H1zM5 1h2v6H5z" fill={CYAN} /></svg></TransportButton>
      <TransportButton $end aria-label="Stop"><svg width="6" height="6"><rect width="6" height="6" fill={CYAN} /></svg></TransportButton>
    </Transport>
    <RecordButton aria-label="Record" />
    <Tempo aria-label="Tempo" defaultValue="160.000" />
    <Divider />
    <Position type="range" aria-label="Song position" defaultValue={48} />
    <Divider $m={5} />
    <Clock>0:15:<span><sup>M:S:CS</sup><sub>15</sub></span></Clock>
    <Divider $m={2} />
    <SmallButton aria-label="Previous pattern"><Icon n="play" s={7} /></SmallButton>
    <PatternButton>样式 2</PatternButton>
    <SmallButton aria-label="Add pattern"><Icon n="plus" s={8} /></SmallButton>
    <svg width="62" height="22" viewBox="-5 0 62 22"><path d={scopePath} fill="none" stroke={CYAN} strokeWidth="1.700" /></svg>
    <Meter><i /><i /><Icon n="clock" s={8} /></Meter>
    <Divider $m={3} />
    <svg width="48" height="20" viewBox="0 0 48 20">
      <rect x="0" y="0" width="14" height="9" fill={CYAN} />
      <path d="M0 18h10l8-1 2-2h14l3 2h9" fill="none" stroke="#5fa6b8" />
    </svg>
    <Readout $w={8}>25</Readout>
    <svg width="8" height="16"><circle cx="4" cy="12" r="3" fill="#357f95" /></svg>
    <Readout $w={35}>3156 MB<br />2 ⬭</Readout>
    <Hint><span>color.flp<br />20:08:00</span><span>Track 16 <b><Icon n="hat" s={10} /></b></span></Hint>
    <Divider $m={0} />
    <Menu>{['文件', '编辑', '添加', '样式', '视图', '选项', '工具', '帮助'].map(m => <button key={m}>{m}</button>)}</Menu>
    {['min', 'restore', 'cross'].map(n => <SmallButton key={n} $w={13} aria-label={n}><Icon n={n} s={8} /></SmallButton>)}
    <Logo width="44" height="28" viewBox="0 0 44 28">
      <path d="M7 11c3-5 8-6 13-2 6-1 16 2 17 9-2 5-10 5-13 1-2-2-2-5-4-6-4-3-8-3-13-2z" fill="#131415" />
      <path d="M27 12c1-4 3-7 6-9M33 20c0 3-1 5-2 8" fill="none" stroke="#131415" strokeWidth="1.300" />
    </Logo>
  </Bar>
);

const ToolBar = () => (
  <ToolRow>
    <ToolButton aria-label="Touch"><Icon n="tray" /></ToolButton>
    <Knob><svg width="24" height="22"><path d="M4 15a8 8 0 1 1 13 0" transform="translate(0 1)" fill="none" stroke="currentColor" strokeWidth="1.700" /><path d="M19 17v4h-4z" fill="#4fb4d0" /></svg></Knob>
    <Knob $dim><svg width="24" height="22"><circle cx="10" cy="11" r="8" fill="#232323" stroke="currentColor" strokeWidth="1.700" /><path d="M19 17v4h-4z" fill="#4fb4d0" /><path d="M10 3v2" stroke="#bbb" /></svg></Knob>
    {tools.map(t => {
      const n = t.replace('*', '');
      return <ToolButton key={n} $on={t.endsWith('*')} aria-label={n}><Icon n={n} s={t.endsWith('*') ? 14 : 13} /></ToolButton>;
    })}
    <MagnetMark><Icon n="magnet" s={11} /></MagnetMark>
    <SnapBox><select aria-label="Snap"><option>1/3 拍</option></select><Icon n="play" s={6} /></SnapBox>
    <span /><span />
    <ToolButton aria-label="Hat"><Icon n="hat" /></ToolButton>
    <ToolButton>控..</ToolButton>
    <ToolButton>Alt</ToolButton>
    <ToolButton>移..</ToolButton>
    <ToolButton aria-label="Cut"><Icon n="cut" /></ToolButton>
    <ToolButton aria-label="Copy"><Icon n="copy" s={13} /></ToolButton>
    <ToolButton aria-label="Paste"><Icon n="paste" s={13} /></ToolButton>
    <ToolButton $w={31}>添加</ToolButton>
    <ToolButton aria-label="Wheel"><Icon n="wheel" s={14} /></ToolButton>
    <News><span><i>10/19</i>&nbsp; FL STUDIO | Low<br />Lifter Bass</span><Icon n="globe" s={12} /></News>
    <ToolButton aria-label="Shop"><Icon n="cart" s={10} /></ToolButton>
  </ToolRow>
);

const BrowserPanel = () => (
  <Browser>
    <BrowserTitle><Icon n="play" s={7} /><Icon n="up" s={8} /><Icon n="back" s={8} />浏览器</BrowserTitle>
    <Tabs>{['wave', 'file', 'plugin', 'world', 'cloud', 'star'].map((n, i) => <Tab key={n} $on={i === 0} aria-label={n}><Icon n={n} s={11} /></Tab>)}</Tabs>
    <Tree>
      <FolderList>
        <FolderRow $cut $indent={41}><button><Icon n="folder" s={9} />Screech Loops</button></FolderRow>
        {['DRY', 'MIDI'].map(n => <FolderRow key={n} $indent={50}><button><Icon n="folder" s={9} />{n}</button></FolderRow>)}
      </FolderList>
      <SampleList>
        {samples.map((s, i) => (
          <SampleRow key={i} $on={i === 3}>
            {i === 3 && <PlayMark><Icon n="play" s={6} /></PlayMark>}
            <button><Icon n="sample" s={8} />OPS_THYRON_{s}</button>
          </SampleRow>
        ))}
      </SampleList>
      <FolderList>
        {lowerFolders.map(([n, d]) => <FolderRow key={n} $indent={d}><button><Icon n="folder" s={9} />{n}</button></FolderRow>)}
      </FolderList>
      <PackRow><Icon n="doc" s={9} /><span>OPS - Uptempo &amp; Har..ore Essentials Vol.1</span></PackRow>
    </Tree>
    <Preview>
      <WaveDrawing cols={previewCols} height={67} />
      <PreviewInfo><button aria-label="Play sample"><Icon n="play" s={7} /></button><b>44.1</b>kHz <b>160</b>BPM <b>16</b><b><Icon n="stretch" s={8} /></b></PreviewInfo>
    </Preview>
    <TagBar><span>TAGS</span><i><Icon n="folderPlain" s={9} /></i><Icon n="search" s={11} /></TagBar>
  </Browser>
);

const PickerPanel = () => (
  <Picker>
    <PickerHead><Icon n="piano" s={11} /><em><Icon n="wave" s={13} /></em><Icon n="curve" s={11} /></PickerHead>
    <PickerList>
      {pickerItems.map(([name, bg, c, edge], i) => (
        <PickerItem key={i} $bg={bg} $c={c} $edge={edge}>
          <WaveDrawing cols={thumbCols} height={16} /><span>{name}</span><Icon n="wave" s={10} />
        </PickerItem>
      ))}
    </PickerList>
  </Picker>
);

const PlaylistPanel = () => (
  <Playlist>
    <TitleBar>
      <Icon n="play" s={8} /><Tool $c="#7fe08c" aria-label="Snap"><Icon n="magnet" s={10} /></Tool><TitleGap />
      {['pencil', 'brush', 'mute', 'speakerX', 'slip', 'slice', 'select', 'zoom', 'speaker'].map(n => <Tool key={n} aria-label={n}><Icon n={n} s={10} /></Tool>)}
      <TitleGap /><Tool $c="#a6e04a" aria-label="Playlist"><Icon n="speakerOut" s={10} /></Tool>
      <Crumbs>播放列表 - Arrangement <i><Icon n="play" s={6} /></i> OPS_THYRON_GATED_KICK_8 <i><Icon n="play" s={6} /></i></Crumbs>
      {['min', 'restore', 'cross'].map(n => <Tool key={n} aria-label={n}><Icon n={n} s={8} /></Tool>)}
    </TitleBar>
    <Columns>
      <PickerPanel />
      <Arrangement>
        <Split $h={27}>
          <HeadTools>
            <em><Icon n="wave" s={12} /></em><Icon n="curve" s={10} /><Icon n="piano" s={10} />
            <button aria-label="Add track"><Icon n="plus" s={8} /></button>
            <em><Icon n="cross" s={8} /></em><Icon n="curve" s={7} /><Icon n="horiz" s={8} />
          </HeadTools>
          <TimeColumn>
            <Overview>
              <button aria-label="Scroll left"><Icon n="left" s={8} /></button>
              <OverviewMap>
                <svg viewBox="0 0 602 12" height="12" preserveAspectRatio="none">
                  <path d="M0 2h5M0 5h10M47 3h14M47 5h26" stroke="#2c3f98" strokeWidth="1.500" />
                  <path d="M0 9.500h230M240 9.500h120" stroke="#2a5a88" strokeDasharray="14 2 5 1" />
                  <path d="M0 11.500h496" stroke="#27508c" /><path d="M238.500 0v12" stroke="#8be6fa" strokeWidth="1.500" />
                </svg>
              </OverviewMap>
              <button aria-label="Scroll right"><Icon n="right" s={8} /></button>
            </Overview>
            <Ruler>
              {bars.map(b => <RulerBar key={b} $in={b < 21} $strong={b % 4 === 1}>{b === 11 ? '' : b}</RulerBar>)}
              <Marker width="12" height="9" style={{ left: barWidth(10.1) }}><path d="M1 1h10v2L6 8 1 3z" fill="#5cc3e0" stroke="#23282a" /></Marker>
            </Ruler>
          </TimeColumn>
          <EdgeColumn><span /><button aria-label="Scroll up"><Icon n="chevUp" s={8} /></button></EdgeColumn>
        </Split>
        <Split>
          <Heads>
            {trackHeights.map((h, i) => (
              <Head key={i} $h={h} $lit={i === 9 || i === 10}>
                <span><span>{i > 0 && `Track ${i + 9}`}</span><small>...</small></span>
                <button aria-label={`Mute track ${i + 9}`}><Icon n="circle" s={8} /></button><i />
              </Head>
            ))}
          </Heads>
          <Canvas>
            <Grid>{bars.map(b => <GridBar key={b} $in={b < 21} $light={Math.floor((b - 1) / 4) % 2 === 0}><i /><i /><i /><i /></GridBar>)}</Grid>
            <Lanes>{trackHeights.map((h, i) => <Lane key={i} $h={h}>{laneContent[i + 9]}</Lane>)}</Lanes>
            <Playhead style={{ left: barWidth(10.1) }} />
            <PenCursor style={{ left: barWidth(19.42) }}><Icon n="cursor" s={12} /></PenCursor>
          </Canvas>
          <EdgeColumn><EdgeThumb /><button aria-label="Scroll down"><Icon n="chevDown" s={8} /></button></EdgeColumn>
        </Split>
      </Arrangement>
    </Columns>
  </Playlist>
);

export default function App() {
  return (
    <>
      <GlobalStyle />
      <Page>
        <TopBar />
        <ToolBar />
        <Main>
          <BrowserPanel />
          <PlaylistPanel />
        </Main>
      </Page>
    </>
  );
}
